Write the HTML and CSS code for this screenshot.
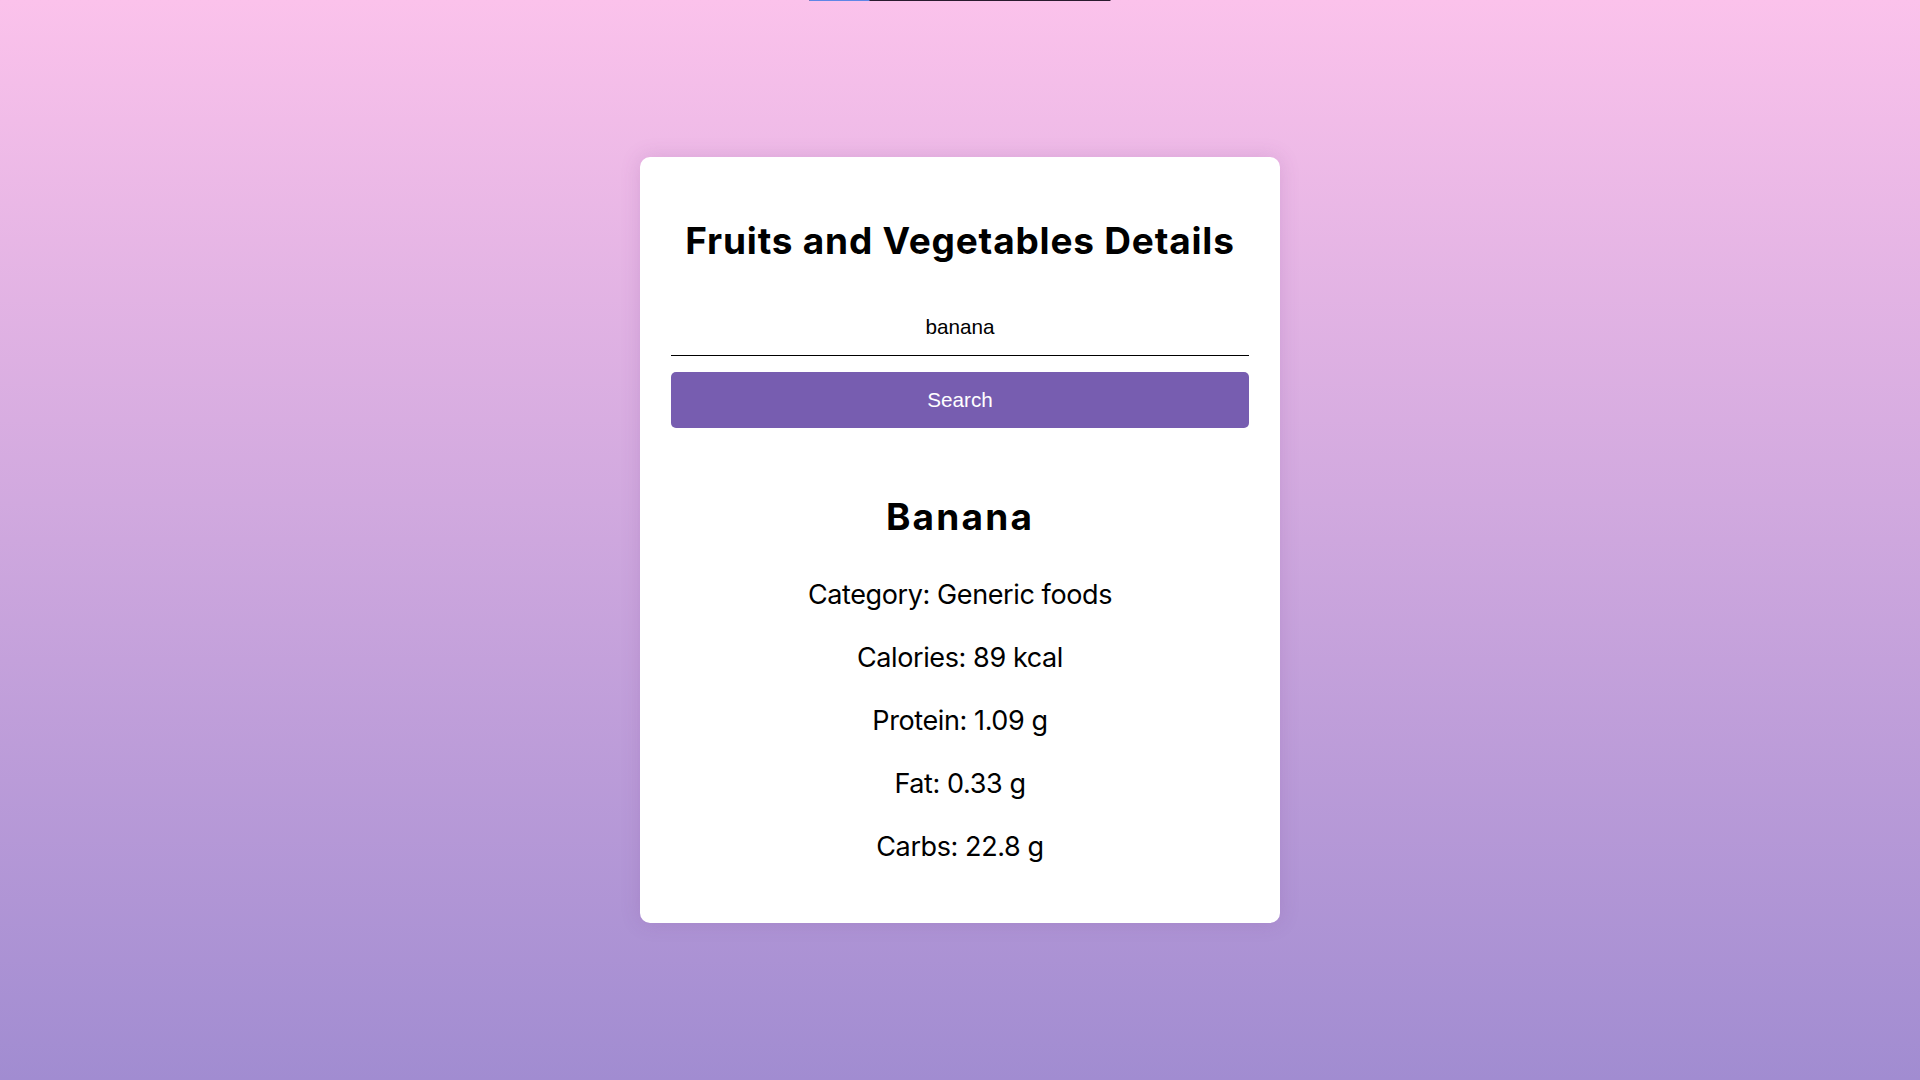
FILE: index.html
```html
<!DOCTYPE html>
<html lang="en">
<head>
	<meta charset="UTF-8">
	<title>Fruits and Vegetables Details</title>
	<meta name="viewport" content="width=device-width, initial-scale=1">
	<link rel="stylesheet" href="styles.css">
</head>
<body>
	<div class="progress"><div class="progress_fill"></div></div>
	<div class="container">
		<h1>Fruits and Vegetables Details</h1>
		<input type="text" id="query" value="banana" placeholder="Enter a fruit or vegetable">
		<button id="searchBtn">Search</button>
		<div class="result" id="result">
			<h2>Banana</h2>
			<p>Category: Generic foods</p>
			<p>Calories: 89 kcal</p>
			<p>Protein: 1.09 g</p>
			<p>Fat: 0.33 g</p>
			<p>Carbs: 22.8 g</p>
		</div>
	</div>
</body>
</html>
```

FILE: styles.css
```css
body {
	margin: 0;
	padding: 0;
	min-height: 100vh;
	display: flex;
	justify-content: center;
	align-items: center;
	background: linear-gradient(to bottom, #fbc2eb 0%, #a18cd1 100%);
	font-family: "Inter", "Liberation Sans", sans-serif;
	color: #000;
}
.progress {
	position: absolute;
	top: 0;
	left: 50%;
	transform: translateX(-50%);
	width: 301px;
	height: 1px;
	background: #2a1a2e;
}
.progress_fill {
	width: 20%;
	height: 100%;
	background: #5f86e6;
}
.container {
	box-sizing: border-box;
	width: 640px;
	padding: 30px 31px;
	background: #fff;
	border-radius: 10px;
	box-shadow: 0 0 20px rgba(120, 60, 140, 0.18);
	text-align: center;
}
h1 {
	font-size: 37px;
	line-height: 44px;
	font-weight: 700;
	letter-spacing: 0.8px;
	margin: 32px 0 42px;
}
#query {
	display: block;
	box-sizing: border-box;
	width: 100%;
	padding: 10px 0 16px;
	border: none;
	border-bottom: 1px solid #000;
	font-family: "Liberation Sans", Arial, sans-serif;
	font-size: 20.7px;
	line-height: 24px;
	text-align: center;
	outline: none;
	background: transparent;
}
#searchBtn {
	display: block;
	box-sizing: border-box;
	width: 100%;
	margin-top: 16px;
	padding: 16px 0;
	border: none;
	border-radius: 5px;
	background: #775db0;
	color: #fff;
	font-family: "Liberation Sans", Arial, sans-serif;
	font-size: 20.7px;
	line-height: 24px;
	cursor: pointer;
}
.result h2 {
	font-size: 37px;
	line-height: 44px;
	font-weight: 700;
	letter-spacing: 2.2px;
	margin: 67px 0 39px;
}
.result p {
	font-size: 27px;
	line-height: 33px;
	letter-spacing: -0.4px;
	margin: 30px 0;
}
```
